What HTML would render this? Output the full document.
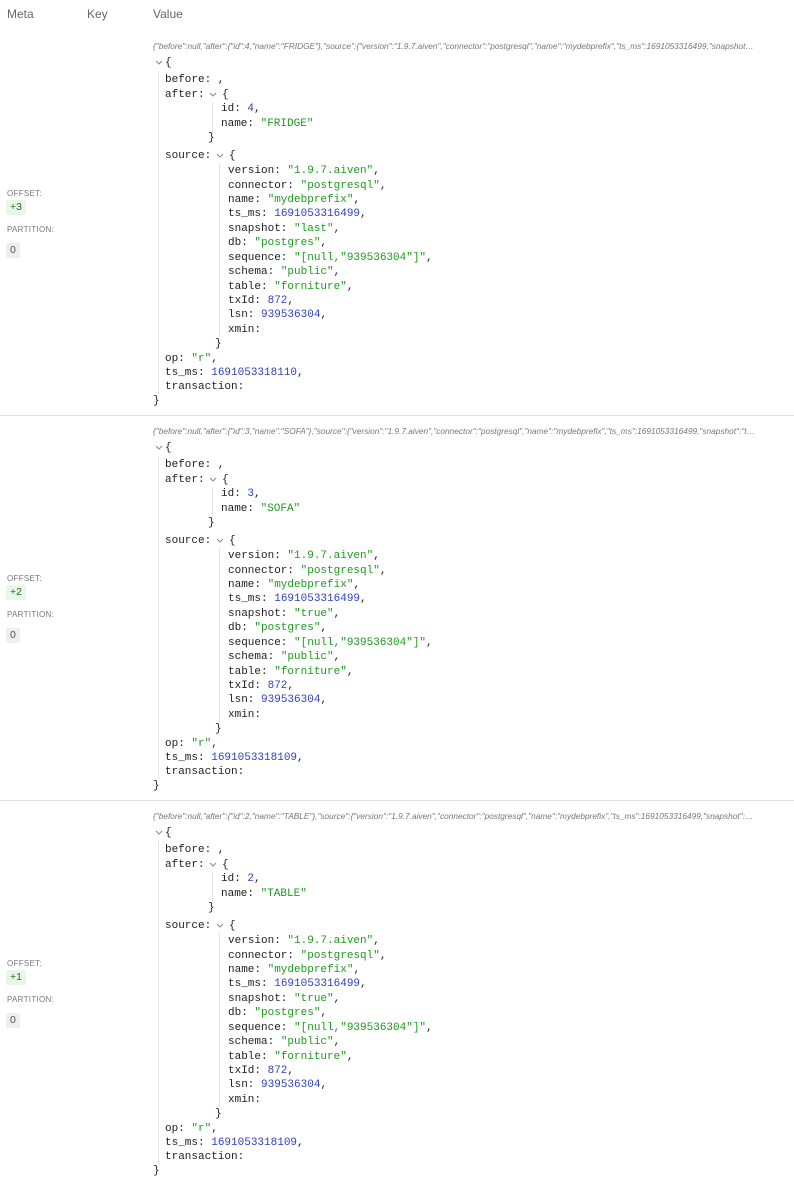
<!DOCTYPE html>
<html><head><meta charset="utf-8"><style>
*{margin:0;padding:0;box-sizing:border-box}
body{width:794px;height:1180px;background:#fff;position:relative;overflow:hidden;font-family:"Liberation Sans",sans-serif}
.h{position:absolute;top:6px;font-size:12px;color:#666;line-height:16px}
.blk{position:absolute;left:0;width:794px;height:386px}
.raw{position:absolute;left:153px;top:-6px;width:603px;font-size:8.3px;font-style:italic;color:#777;white-space:nowrap;overflow:hidden;text-overflow:ellipsis;line-height:12px}
.l{position:absolute;font-family:"Liberation Mono",monospace;font-size:11px;line-height:14px;color:#222;white-space:pre}
.s{color:#1d9b1d}.n{color:#3340c0}
.lbl{position:absolute;left:7px;font-size:8px;color:#777;letter-spacing:.3px;line-height:10px}
.bdg{position:absolute;left:6px;height:15px;font-size:10.5px;line-height:15px;padding:0 4px;border-radius:2px}
.g{background:#e9f6ea;color:#2a6b2a}.gr{background:#eee;color:#555}
.vl{position:absolute;width:1px;background:#e3e3e3}
.hr{position:absolute;left:0;width:794px;height:1px;background:#e2e2e2}
svg.c{position:absolute}
</style></head><body>
<div class="h" style="left:7px">Meta</div>
<div class="h" style="left:87px">Key</div>
<div class="h" style="left:153px">Value</div>

<!-- block 1 -->
<div class="blk" style="top:46px">
<div class="raw">{"before":null,"after":{"id":4,"name":"FRIDGE"},"source":{"version":"1.9.7.aiven","connector":"postgresql","name":"mydebprefix","ts_ms":1691053316499,"snapshot":"last","db":"postgres"}}</div>
<div class="lbl" style="top:143px">OFFSET:</div>
<div class="bdg g" style="top:154px">+3</div>
<div class="lbl" style="top:179px">PARTITION:</div>
<div class="bdg gr" style="top:197px">0</div>
<svg class="c" style="left:155px;top:14px" width="8" height="6"><polyline points="1,1 4,4 7,1" fill="none" stroke="#888" stroke-width="1"/></svg>
<div class="l" style="left:165px;top:10px">{</div>
<div class="vl" style="left:158px;top:25px;height:323px"></div>
<div class="l" style="left:165px;top:27px">before: ,</div>
<div class="l" style="left:165px;top:42px">after: </div>
<svg class="c" style="left:209px;top:46px" width="8" height="6"><polyline points="1,1 4,4 7,1" fill="none" stroke="#888" stroke-width="1"/></svg>
<div class="l" style="left:222px;top:42px">{</div>
<div class="vl" style="left:212px;top:56px;height:32px"></div>
<div class="l" style="left:221px;top:56px">id: <span class="n">4</span>,</div>
<div class="l" style="left:221px;top:71px">name: <span class="s">"FRIDGE"</span></div>
<div class="l" style="left:208px;top:85px">}</div>
<div class="l" style="left:165px;top:103px">source: </div>
<svg class="c" style="left:216px;top:107px" width="8" height="6"><polyline points="1,1 4,4 7,1" fill="none" stroke="#888" stroke-width="1"/></svg>
<div class="l" style="left:229px;top:103px">{</div>
<div class="vl" style="left:219px;top:117px;height:174px"></div>
<div class="l" style="left:228px;top:118px">version: <span class="s">"1.9.7.aiven"</span>,</div>
<div class="l" style="left:228px;top:133px">connector: <span class="s">"postgresql"</span>,</div>
<div class="l" style="left:228px;top:147px">name: <span class="s">"mydebprefix"</span>,</div>
<div class="l" style="left:228px;top:161px">ts_ms: <span class="n">1691053316499</span>,</div>
<div class="l" style="left:228px;top:176px">snapshot: <span class="s">"last"</span>,</div>
<div class="l" style="left:228px;top:190px">db: <span class="s">"postgres"</span>,</div>
<div class="l" style="left:228px;top:205px">sequence: <span class="s">"[null,"939536304"]"</span>,</div>
<div class="l" style="left:228px;top:219px">schema: <span class="s">"public"</span>,</div>
<div class="l" style="left:228px;top:234px">table: <span class="s">"forniture"</span>,</div>
<div class="l" style="left:228px;top:248px">txId: <span class="n">872</span>,</div>
<div class="l" style="left:228px;top:262px">lsn: <span class="n">939536304</span>,</div>
<div class="l" style="left:228px;top:277px">xmin: </div>
<div class="l" style="left:215px;top:291px">}</div>
<div class="l" style="left:165px;top:306px">op: <span class="s">"r"</span>,</div>
<div class="l" style="left:165px;top:320px">ts_ms: <span class="n">1691053318110</span>,</div>
<div class="l" style="left:165px;top:334px">transaction: </div>
<div class="l" style="left:153px;top:348px">}</div>
</div>
<div class="hr" style="top:415px"></div>

<!-- block 2 -->
<div class="blk" style="top:431px">
<div class="raw">{"before":null,"after":{"id":3,"name":"SOFA"},"source":{"version":"1.9.7.aiven","connector":"postgresql","name":"mydebprefix","ts_ms":1691053316499,"snapshot":"true","db":"postgres"}}</div>
<div class="lbl" style="top:143px">OFFSET:</div>
<div class="bdg g" style="top:154px">+2</div>
<div class="lbl" style="top:179px">PARTITION:</div>
<div class="bdg gr" style="top:197px">0</div>
<svg class="c" style="left:155px;top:14px" width="8" height="6"><polyline points="1,1 4,4 7,1" fill="none" stroke="#888" stroke-width="1"/></svg>
<div class="l" style="left:165px;top:10px">{</div>
<div class="vl" style="left:158px;top:25px;height:323px"></div>
<div class="l" style="left:165px;top:27px">before: ,</div>
<div class="l" style="left:165px;top:42px">after: </div>
<svg class="c" style="left:209px;top:46px" width="8" height="6"><polyline points="1,1 4,4 7,1" fill="none" stroke="#888" stroke-width="1"/></svg>
<div class="l" style="left:222px;top:42px">{</div>
<div class="vl" style="left:212px;top:56px;height:32px"></div>
<div class="l" style="left:221px;top:56px">id: <span class="n">3</span>,</div>
<div class="l" style="left:221px;top:71px">name: <span class="s">"SOFA"</span></div>
<div class="l" style="left:208px;top:85px">}</div>
<div class="l" style="left:165px;top:103px">source: </div>
<svg class="c" style="left:216px;top:107px" width="8" height="6"><polyline points="1,1 4,4 7,1" fill="none" stroke="#888" stroke-width="1"/></svg>
<div class="l" style="left:229px;top:103px">{</div>
<div class="vl" style="left:219px;top:117px;height:174px"></div>
<div class="l" style="left:228px;top:118px">version: <span class="s">"1.9.7.aiven"</span>,</div>
<div class="l" style="left:228px;top:133px">connector: <span class="s">"postgresql"</span>,</div>
<div class="l" style="left:228px;top:147px">name: <span class="s">"mydebprefix"</span>,</div>
<div class="l" style="left:228px;top:161px">ts_ms: <span class="n">1691053316499</span>,</div>
<div class="l" style="left:228px;top:176px">snapshot: <span class="s">"true"</span>,</div>
<div class="l" style="left:228px;top:190px">db: <span class="s">"postgres"</span>,</div>
<div class="l" style="left:228px;top:205px">sequence: <span class="s">"[null,"939536304"]"</span>,</div>
<div class="l" style="left:228px;top:219px">schema: <span class="s">"public"</span>,</div>
<div class="l" style="left:228px;top:234px">table: <span class="s">"forniture"</span>,</div>
<div class="l" style="left:228px;top:248px">txId: <span class="n">872</span>,</div>
<div class="l" style="left:228px;top:262px">lsn: <span class="n">939536304</span>,</div>
<div class="l" style="left:228px;top:277px">xmin: </div>
<div class="l" style="left:215px;top:291px">}</div>
<div class="l" style="left:165px;top:306px">op: <span class="s">"r"</span>,</div>
<div class="l" style="left:165px;top:320px">ts_ms: <span class="n">1691053318109</span>,</div>
<div class="l" style="left:165px;top:334px">transaction: </div>
<div class="l" style="left:153px;top:348px">}</div>
</div>
<div class="hr" style="top:800px"></div>

<!-- block 3 -->
<div class="blk" style="top:816px">
<div class="raw">{"before":null,"after":{"id":2,"name":"TABLE"},"source":{"version":"1.9.7.aiven","connector":"postgresql","name":"mydebprefix","ts_ms":1691053316499,"snapshot":"true","db":"postgres"}}</div>
<div class="lbl" style="top:143px">OFFSET:</div>
<div class="bdg g" style="top:154px">+1</div>
<div class="lbl" style="top:179px">PARTITION:</div>
<div class="bdg gr" style="top:197px">0</div>
<svg class="c" style="left:155px;top:14px" width="8" height="6"><polyline points="1,1 4,4 7,1" fill="none" stroke="#888" stroke-width="1"/></svg>
<div class="l" style="left:165px;top:10px">{</div>
<div class="vl" style="left:158px;top:25px;height:323px"></div>
<div class="l" style="left:165px;top:27px">before: ,</div>
<div class="l" style="left:165px;top:42px">after: </div>
<svg class="c" style="left:209px;top:46px" width="8" height="6"><polyline points="1,1 4,4 7,1" fill="none" stroke="#888" stroke-width="1"/></svg>
<div class="l" style="left:222px;top:42px">{</div>
<div class="vl" style="left:212px;top:56px;height:32px"></div>
<div class="l" style="left:221px;top:56px">id: <span class="n">2</span>,</div>
<div class="l" style="left:221px;top:71px">name: <span class="s">"TABLE"</span></div>
<div class="l" style="left:208px;top:85px">}</div>
<div class="l" style="left:165px;top:103px">source: </div>
<svg class="c" style="left:216px;top:107px" width="8" height="6"><polyline points="1,1 4,4 7,1" fill="none" stroke="#888" stroke-width="1"/></svg>
<div class="l" style="left:229px;top:103px">{</div>
<div class="vl" style="left:219px;top:117px;height:174px"></div>
<div class="l" style="left:228px;top:118px">version: <span class="s">"1.9.7.aiven"</span>,</div>
<div class="l" style="left:228px;top:133px">connector: <span class="s">"postgresql"</span>,</div>
<div class="l" style="left:228px;top:147px">name: <span class="s">"mydebprefix"</span>,</div>
<div class="l" style="left:228px;top:161px">ts_ms: <span class="n">1691053316499</span>,</div>
<div class="l" style="left:228px;top:176px">snapshot: <span class="s">"true"</span>,</div>
<div class="l" style="left:228px;top:190px">db: <span class="s">"postgres"</span>,</div>
<div class="l" style="left:228px;top:205px">sequence: <span class="s">"[null,"939536304"]"</span>,</div>
<div class="l" style="left:228px;top:219px">schema: <span class="s">"public"</span>,</div>
<div class="l" style="left:228px;top:234px">table: <span class="s">"forniture"</span>,</div>
<div class="l" style="left:228px;top:248px">txId: <span class="n">872</span>,</div>
<div class="l" style="left:228px;top:262px">lsn: <span class="n">939536304</span>,</div>
<div class="l" style="left:228px;top:277px">xmin: </div>
<div class="l" style="left:215px;top:291px">}</div>
<div class="l" style="left:165px;top:306px">op: <span class="s">"r"</span>,</div>
<div class="l" style="left:165px;top:320px">ts_ms: <span class="n">1691053318109</span>,</div>
<div class="l" style="left:165px;top:334px">transaction: </div>
<div class="l" style="left:153px;top:348px">}</div>
</div>
</body></html>
